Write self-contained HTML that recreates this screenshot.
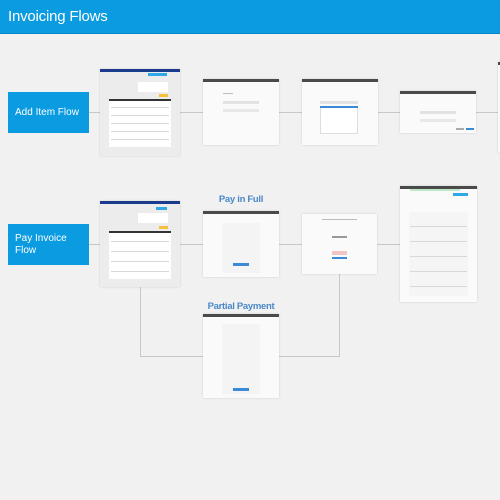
<!DOCTYPE html>
<html><head><style>
*{margin:0;padding:0;box-sizing:border-box}
body{width:500px;height:500px;background:#f1f1f1;position:relative;overflow:hidden;font-family:"Liberation Sans",sans-serif}
.hdr{position:absolute;left:0;top:0;width:500px;height:34px;background:#0a9be0;border-bottom:1px solid #0a86c4}
.hdr span{position:absolute;left:8px;top:8px;color:#fff;font-size:15px;letter-spacing:-0.2px}
.flow{position:absolute;left:8px;width:81px;height:41px;background:#0a9be0;color:#fff;font-size:10px;padding-left:7px;display:flex;align-items:center;line-height:12px}
.ln{position:absolute;background:#c8c8c8}
.card{position:absolute;background:#fafafa;box-shadow:0 0 2px rgba(0,0,0,.15)}
.bar{position:absolute;left:0;top:0;right:0;height:3px;background:#4a4a4a}
.g{position:absolute;background:#d8d8d8;height:1px}
.lbl{position:absolute;color:#4a88c8;font-size:9.5px;font-weight:bold;text-align:center;width:100px;letter-spacing:-0.3px}
</style></head><body>
<div class="hdr"><span>Invoicing Flows</span></div>

<div class="ln" style="left:89px;top:112px;width:411px;height:1px"></div>
<div class="ln" style="left:89px;top:244px;width:311px;height:1px"></div>
<div class="ln" style="left:140px;top:287px;width:1px;height:69px"></div>
<div class="ln" style="left:140px;top:356px;width:63px;height:1px"></div>
<div class="ln" style="left:279px;top:356px;width:60px;height:1px"></div>
<div class="ln" style="left:339px;top:274px;width:1px;height:83px"></div>

<div class="flow" style="top:92px">Add Item Flow</div>
<div class="flow" style="top:224px">Pay Invoice<br>Flow</div>

<!-- card1 -->
<div class="card" style="left:100px;top:69px;width:80px;height:87px;background:#ececec">
 <div class="bar" style="background:#1b3c8c"></div>
 <div style="position:absolute;left:48px;top:4px;width:19px;height:3px;background:#2fa8e8"></div>
 <div style="position:absolute;left:38px;top:13px;width:30px;height:10px;background:#fff"></div>
 <div style="position:absolute;left:59px;top:25px;width:9px;height:3px;background:#f5c13a"></div>
 <div style="position:absolute;left:9px;top:30px;width:62px;height:48px;background:#fff"></div>
 <div style="position:absolute;left:9px;top:30px;width:62px;height:2px;background:#333"></div>
 <div class="g" style="left:11px;top:38px;width:58px"></div><div class="g" style="left:11px;top:46px;width:58px"></div>
 <div class="g" style="left:11px;top:54px;width:58px"></div><div class="g" style="left:11px;top:62px;width:58px"></div>
 <div class="g" style="left:11px;top:70px;width:58px"></div>
</div>
<!-- card2 -->
<div class="card" style="left:203px;top:79px;width:76px;height:66px"><div class="bar"></div>
 <div style="position:absolute;left:20px;top:14px;width:10px;height:1px;background:#bbb"></div>
 <div style="position:absolute;left:20px;top:22px;width:36px;height:3px;background:#e2e2e2"></div>
 <div style="position:absolute;left:20px;top:30px;width:36px;height:3px;background:#e8e8e8"></div></div>
<!-- card3 -->
<div class="card" style="left:302px;top:79px;width:76px;height:66px"><div class="bar"></div>
 <div style="position:absolute;left:18px;top:22px;width:38px;height:3px;background:#e2e2e2"></div>
 <div style="position:absolute;left:18px;top:27px;width:38px;height:28px;background:#fff;border:1px solid #ddd"></div>
 <div style="position:absolute;left:18px;top:27px;width:38px;height:2px;background:#3a8ad8"></div></div>
<!-- card4 -->
<div class="card" style="left:400px;top:91px;width:76px;height:42px"><div class="bar"></div>
 <div style="position:absolute;left:20px;top:20px;width:36px;height:3px;background:#e2e2e2"></div>
 <div style="position:absolute;left:20px;top:28px;width:36px;height:3px;background:#e8e8e8"></div>
 <div style="position:absolute;left:56px;top:37px;width:8px;height:2px;background:#aaa"></div>
 <div style="position:absolute;left:66px;top:37px;width:8px;height:2px;background:#3a8ad8"></div></div>
<div class="card" style="left:498px;top:62px;width:4px;height:90px"><div class="bar"></div></div>

<!-- card5 -->
<div class="card" style="left:100px;top:201px;width:80px;height:86px;background:#ececec">
 <div class="bar" style="background:#1b3c8c"></div>
 <div style="position:absolute;left:56px;top:6px;width:11px;height:3px;background:#2fa8e8"></div>
 <div style="position:absolute;left:38px;top:12px;width:30px;height:10px;background:#fff"></div>
 <div style="position:absolute;left:59px;top:25px;width:9px;height:3px;background:#f5c13a"></div>
 <div style="position:absolute;left:9px;top:30px;width:62px;height:48px;background:#fff"></div>
 <div style="position:absolute;left:9px;top:30px;width:62px;height:2px;background:#333"></div>
 <div class="g" style="left:11px;top:40px;width:58px"></div><div class="g" style="left:11px;top:50px;width:58px"></div>
 <div class="g" style="left:11px;top:60px;width:58px"></div><div class="g" style="left:11px;top:70px;width:58px"></div>
</div>
<div class="lbl" style="left:191px;top:194px">Pay in Full</div>
<div class="card" style="left:203px;top:211px;width:76px;height:66px"><div class="bar"></div>
 <div style="position:absolute;left:19px;top:12px;width:38px;height:50px;background:#f4f4f4"></div>
 <div style="position:absolute;left:30px;top:52px;width:16px;height:3px;background:#3a8ad8"></div></div>
<div class="card" style="left:302px;top:214px;width:75px;height:60px">
 <div style="position:absolute;left:20px;top:5px;width:35px;height:1px;background:#bbb"></div>
 <div style="position:absolute;left:30px;top:22px;width:15px;height:2px;background:#999"></div>
 <div style="position:absolute;left:30px;top:37px;width:15px;height:4px;background:#f2c4c4"></div>
 <div style="position:absolute;left:30px;top:43px;width:15px;height:2px;background:#3a8ad8"></div></div>
<div class="card" style="left:400px;top:186px;width:77px;height:116px"><div class="bar"></div>
 <div style="position:absolute;left:10px;top:3px;width:50px;height:2px;background:#bfe8c8"></div>
 <div style="position:absolute;left:53px;top:7px;width:15px;height:3px;background:#2fa8e8"></div>
 <div style="position:absolute;left:9px;top:26px;width:59px;height:84px;background:#f5f5f5"></div>
 <div class="g" style="left:10px;top:40px;width:57px"></div><div class="g" style="left:10px;top:55px;width:57px"></div>
 <div class="g" style="left:10px;top:70px;width:57px"></div><div class="g" style="left:10px;top:85px;width:57px"></div>
 <div class="g" style="left:10px;top:100px;width:57px"></div></div>

<div class="lbl" style="left:191px;top:301px">Partial Payment</div>
<div class="card" style="left:203px;top:314px;width:76px;height:84px"><div class="bar"></div>
 <div style="position:absolute;left:19px;top:10px;width:38px;height:70px;background:#f4f4f4"></div>
 <div style="position:absolute;left:30px;top:74px;width:16px;height:3px;background:#3a8ad8"></div></div>
</body></html>
